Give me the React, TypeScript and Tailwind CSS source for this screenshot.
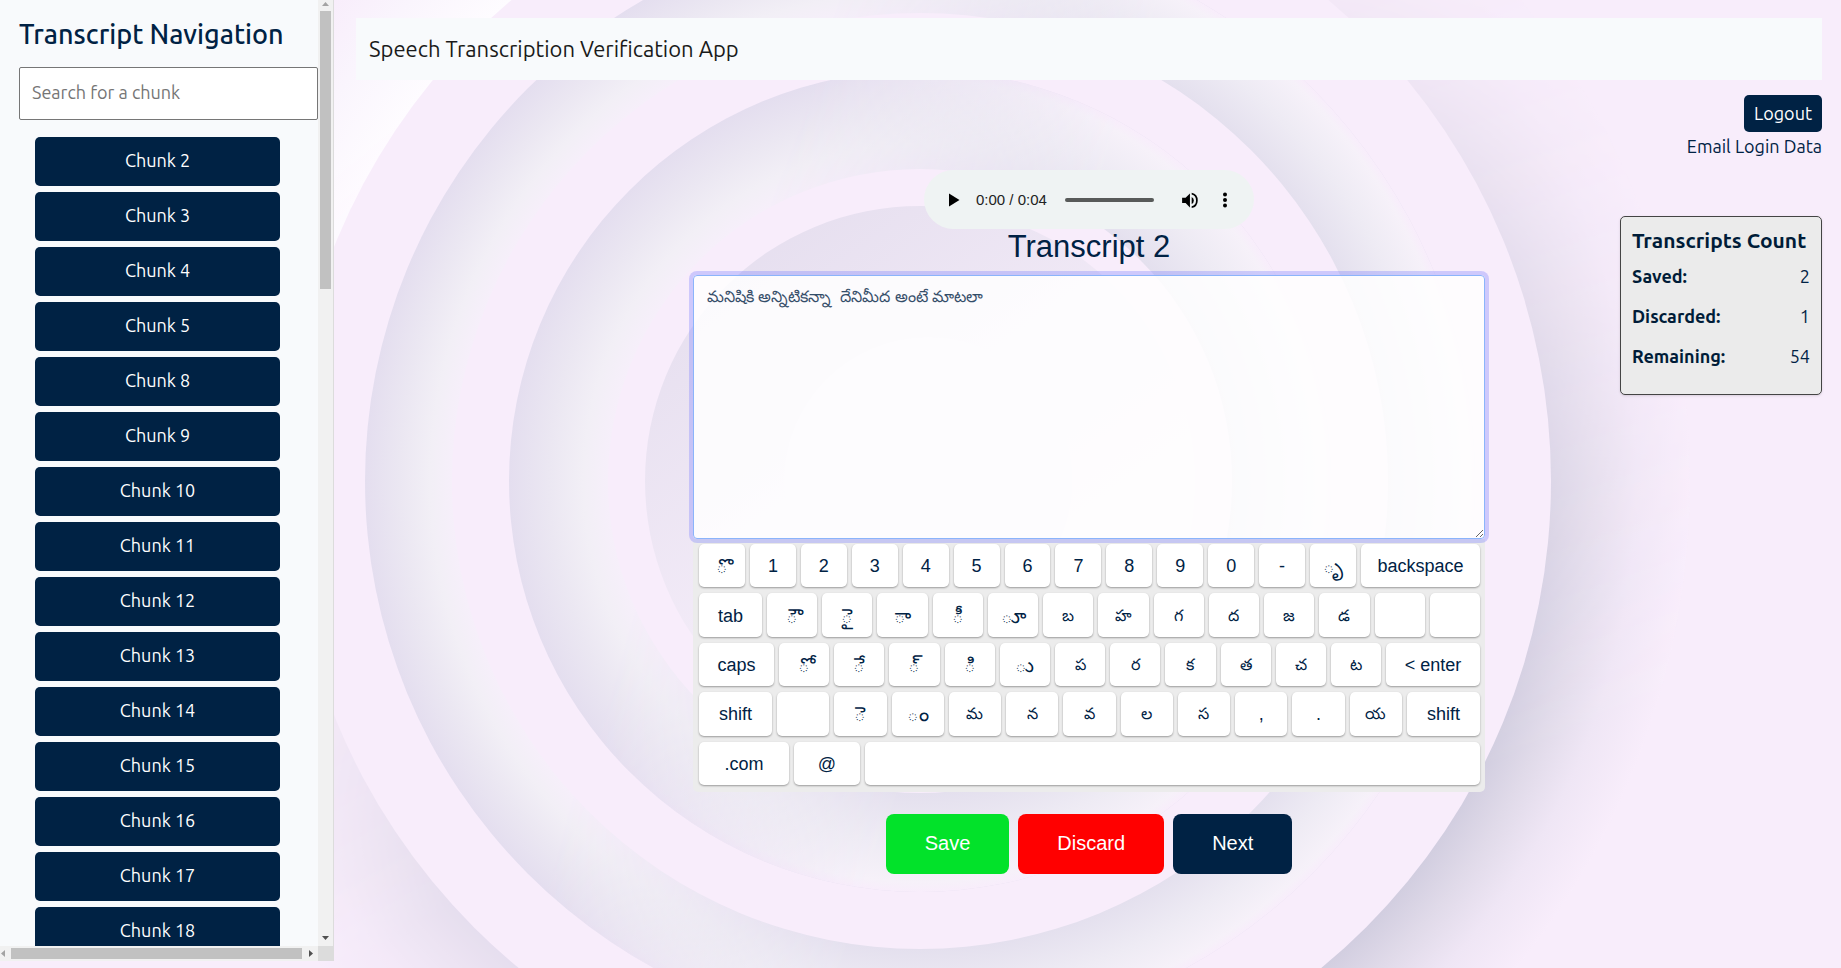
import React from "react";

const chunks = [2, 3, 4, 5, 8, 9, 10, 11, 12, 13, 14, 15, 16, 17, 18];

type Key = { label: string; width?: string };

const plain = (labels: string[]): Key[] => labels.map((label) => ({ label }));

const keyRows: Key[][] = [
  [...plain(["ొ", "1", "2", "3", "4", "5", "6", "7", "8", "9", "0", "-", "ృ"]), { label: "backspace", width: "w-[119px]" }],
  [{ label: "tab", width: "w-[63px]" }, ...plain(["ౌ", "ై", "ా", "ీ", "ూ", "బ", "హ", "గ", "ద", "జ", "డ", "", ""])],
  [
    { label: "caps", width: "w-[75px]" },
    ...plain(["ో", "ే", "్", "ి", "ు", "ప", "ర", "క", "త", "చ", "ట"]),
    { label: "< enter", width: "w-[94px]" },
  ],
  [
    { label: "shift", width: "w-[73px]" },
    ...plain(["", "ె", "ం", "మ", "న", "వ", "ల", "స", ",", ".", "య"]),
    { label: "shift", width: "w-[73px]" },
  ],
  [{ label: ".com", width: "w-[90px]" }, { label: "@", width: "w-[66px]" }, { label: "" }],
];

const counts = [
  { label: "Saved:", value: 2 },
  { label: "Discarded:", value: 1 },
  { label: "Remaining:", value: 54 },
];

// Dependent vowel signs read small on a dotted circle, full letters read large.
function keyTextSize(label: string) {
  if (/^[\u0c00-\u0c04\u0c3e-\u0c56]/.test(label)) return "text-[20px]";
  if (/^[\u0c05-\u0c39]/.test(label)) return "text-[16px]";
  return "text-[18px]";
}

function Groove({ id, outer, inner }: { id: string; outer: number; inner: number }) {
  const k = inner / outer;
  const at = (t: number) => k + (1 - k) * t;
  return (
    <g>
      <defs>
        <radialGradient id={`${id}-a`} gradientUnits="userSpaceOnUse" cx="920" cy="481" r={outer}>
          <stop offset={k} stopColor="#f6effa" />
          <stop offset={at(0.25)} stopColor="#f2eff6" />
          <stop offset={at(0.6)} stopColor="#ebe7f2" />
          <stop offset="1" stopColor="#e4deef" />
        </radialGradient>
        <radialGradient id={`${id}-b`} gradientUnits="userSpaceOnUse" cx="920" cy="481" r={outer}>
          <stop offset={k} stopColor="#e4e0ee" />
          <stop offset={at(0.5)} stopColor="#eeebf4" />
          <stop offset={at(0.9)} stopColor="#f6f1f9" />
          <stop offset="1" stopColor="#f8edfb" />
        </radialGradient>
      </defs>
      <circle cx="920" cy="481" r={outer} fill={`url(#${id}-a)`} />
      <circle cx="920" cy="481" r={outer} fill={`url(#${id}-b)`} mask="url(#lowerRight)" />
      <circle cx="920" cy="481" r={inner} fill="#f8edfb" />
    </g>
  );
}

function Backdrop() {
  return (
    <svg
      aria-hidden="true"
      className="absolute inset-0 -z-10 h-full w-full"
      viewBox="0 0 1841 968"
      preserveAspectRatio="xMidYMid slice"
    >
      <defs>
        <linearGradient id="toLowerRight" gradientUnits="userSpaceOnUse" x1="700" y1="400" x2="1000" y2="500">
          <stop offset="0" stopColor="#000" />
          <stop offset="1" stopColor="#fff" />
        </linearGradient>
        <linearGradient id="toUpperLeft" gradientUnits="userSpaceOnUse" x1="420" y1="80" x2="700" y2="420">
          <stop offset="0" stopColor="#fff" />
          <stop offset="1" stopColor="#000" />
        </linearGradient>
        <linearGradient id="castFade" gradientUnits="userSpaceOnUse" x1="1150" y1="60" x2="1400" y2="800">
          <stop offset="0" stopColor="#222" />
          <stop offset="1" stopColor="#fff" />
        </linearGradient>
        <linearGradient id="castFadeLeft" gradientUnits="userSpaceOnUse" x1="300" y1="620" x2="460" y2="900">
          <stop offset="0" stopColor="#000" />
          <stop offset="1" stopColor="#777" />
        </linearGradient>
        <linearGradient id="innerFade" gradientUnits="userSpaceOnUse" x1="800" y1="200" x2="1060" y2="560">
          <stop offset="0" stopColor="#e6dfef" />
          <stop offset="1" stopColor="#f8f0fb" />
        </linearGradient>
        <mask id="lowerRight" maskUnits="userSpaceOnUse" x="0" y="-200" width="1841" height="1400">
          <rect x="0" y="-200" width="1841" height="1400" fill="url(#toLowerRight)" />
        </mask>
        <mask id="upperLeft" maskUnits="userSpaceOnUse" x="0" y="-200" width="1841" height="1400">
          <rect x="0" y="-200" width="1841" height="1400" fill="url(#toUpperLeft)" />
        </mask>
        <mask id="cast" maskUnits="userSpaceOnUse" x="0" y="-200" width="1841" height="1400">
          <rect x="920" y="-200" width="921" height="1400" fill="url(#castFade)" />
          <rect x="0" y="500" width="920" height="700" fill="url(#castFadeLeft)" />
        </mask>
        <radialGradient id="glow" gradientUnits="userSpaceOnUse" cx="920" cy="481" r="760">
          <stop offset="0.83" stopColor="#fefcff" />
          <stop offset="0.92" stopColor="#faf5fd" />
          <stop offset="1" stopColor="#f8edfb" />
        </radialGradient>
        <radialGradient id="castShadow" gradientUnits="userSpaceOnUse" cx="920" cy="481" r="770">
          <stop offset="0.82" stopColor="#d2cee0" />
          <stop offset="0.87" stopColor="#e0dae9" />
          <stop offset="0.93" stopColor="#efe6f5" />
          <stop offset="1" stopColor="#f8edfb" />
        </radialGradient>
      </defs>
      <rect width="1841" height="968" fill="#f8edfb" />
      <circle cx="920" cy="481" r="760" fill="url(#glow)" mask="url(#upperLeft)" />
      <circle cx="920" cy="481" r="770" fill="url(#castShadow)" mask="url(#cast)" />
      <circle cx="920" cy="481" r="631" fill="#f8edfb" />
      <Groove id="g1" outer={555} inner={468} />
      <Groove id="g2" outer={411} inner={312} />
      <circle cx="920" cy="481" r="275" fill="url(#innerFade)" />
      <circle cx="928" cy="481" r="144" fill="#efe8f5" />
    </svg>
  );
}

function Sidebar() {
  return (
    <aside className="flex h-[961px] w-[334px] shrink-0 flex-col border-r border-[#dcdcdc] bg-[#f8fafc]">
      <div className="flex min-h-0 flex-1">
        <div className="min-w-0 flex-1 overflow-hidden pl-[19px] pt-3">
          <h2 className="text-[27px] font-medium leading-[44px] text-[#002244]">Transcript Navigation</h2>
          <input
            type="text"
            aria-label="Search for a chunk"
            placeholder="Search for a chunk"
            className="mt-[11px] block h-[53px] w-full rounded-[2px] border border-[#767676] bg-white px-3 pb-[3px] text-[18px] text-[#002244] placeholder:text-[#757575]"
          />
          <ul className="mt-[17px] flex flex-col gap-[6px] pl-4 pr-[38px]">
            {chunks.map((n) => (
              <li key={n}>
                <button type="button" className="block h-[49px] w-full rounded-[5px] bg-[#002244] pb-[2px] text-[18px] text-white">
                  Chunk {n}
                </button>
              </li>
            ))}
          </ul>
        </div>
        <div aria-hidden="true" className="flex w-[15px] shrink-0 flex-col items-center bg-[#f1f1f1]">
          <svg className="h-[11px] w-[15px]" viewBox="0 0 15 11">
            <path d="M4 6h7L7.500 2z" fill="#a3a3a3" />
          </svg>
          <div className="h-[278px] w-[11px] bg-[#c1c1c1]" />
          <svg className="mt-auto h-[15px] w-[15px]" viewBox="0 0 15 15">
            <path d="M4 5h7L7.500 9z" fill="#505050" />
          </svg>
        </div>
      </div>
      <div aria-hidden="true" className="flex h-[15px] items-center bg-[#f1f1f1]">
        <svg className="h-[15px] w-[11px]" viewBox="0 0 11 15">
          <path d="M5 4v7L1 7.500z" fill="#a3a3a3" />
        </svg>
        <div className="h-[11px] flex-1 bg-[#c1c1c1]" />
        <svg className="h-[15px] w-4" viewBox="0 0 16 15">
          <path d="M7 4v7l4-3.500z" fill="#505050" />
        </svg>
        <div className="h-full w-[15px] bg-[#dcdcdc]" />
      </div>
    </aside>
  );
}

function AudioPlayer() {
  return (
    <div className="flex h-[59px] w-[330px] items-center rounded-full bg-[#eff3f3] pl-[19px] pr-[17px] text-black">
      <button type="button" aria-label="Play">
        <svg className="h-6 w-6" viewBox="0 0 24 24">
          <path d="M6 5.500v13l10.500-6.500z" />
        </svg>
      </button>
      <span className="ml-[9px] pt-px text-[15px] text-[#222]">0:00 / 0:04</span>
      <input
        type="range"
        aria-label="Playback position"
        min={0}
        max={4}
        defaultValue={0}
        className="ml-[18px] h-1 min-w-0 flex-1 appearance-none rounded-full bg-[#585a59] [&::-webkit-slider-thumb]:h-0 [&::-webkit-slider-thumb]:w-0 [&::-webkit-slider-thumb]:appearance-none"
      />
      <button type="button" aria-label="Mute" className="ml-6">
        <svg className="h-6 w-6" viewBox="0 0 24 24">
          <path d="M3 9v6h4l5 5V4L7 9H3zm13.500 3A4.500 4.500 0 0 0 14 7.970v8.050A4.490 4.490 0 0 0 16.500 12zM14 3.230v2.060a7 7 0 0 1 0 13.420v2.060a9 9 0 0 0 0-17.540z" transform="translate(1.500 2) scale(.87)" />
        </svg>
      </button>
      <button type="button" aria-label="More options" className="ml-[11px]">
        <svg className="h-6 w-6" viewBox="0 0 24 24">
          <circle cx="12" cy="6.500" r="2" />
          <circle cx="12" cy="12" r="2" />
          <circle cx="12" cy="17.500" r="2" />
        </svg>
      </button>
    </div>
  );
}

function Keyboard() {
  return (
    <div className="flex h-[253px] w-full flex-col gap-[6px] rounded-b-[5px] bg-[#ececec] pb-[7px] pl-[6px] pr-[5px] pt-[5px]">
      {keyRows.map((row, r) => (
        <div key={r} className="flex min-h-0 flex-1 gap-[5px]">
          {row.map((key, i) => (
            <button
              key={i}
              type="button"
              aria-label={key.label || "blank"}
              className={`flex items-center justify-center rounded-[5px] bg-white pt-px leading-6 text-[#002244] shadow-[0_1px_2px_rgba(0,0,0,0.35)] ${keyTextSize(key.label)} ${key.width ? `${key.width} shrink-0` : "min-w-0 flex-1"}`}
            >
              {key.label}
            </button>
          ))}
        </div>
      ))}
    </div>
  );
}

export default function App() {
  return (
    <div className="relative isolate flex min-h-screen items-start overflow-hidden font-['Ubuntu','Noto_Sans',sans-serif] text-[#002244]">
      <Backdrop />
      <Sidebar />
      <main className="min-w-0 flex-1 pl-[22px] pr-[19px] pt-[18px]">
        <header className="flex h-[62px] items-center bg-[#f8fafc] px-[13px] pb-[2px]">
          <h1 className="text-[22px] text-[#1a1a1a]">Speech Transcription Verification App</h1>
        </header>
        <div className="grid grid-cols-[202px_1fr_202px] items-start">
          <section className="col-start-2 flex flex-col items-center pt-[90px] font-['Liberation_Sans','Vemana2000','Pothana2000','Lohit_Telugu',sans-serif]">
            <AudioPlayer />
            <h2 className="mb-[10px] text-[31px] leading-9">Transcript 2</h2>
            <div className="w-[792px] max-w-full">
              <textarea
                aria-label="Transcript text"
                defaultValue="మనిషికి అన్నిటికన్నా  దేనిమీద అంటే మాటలా"
                className="relative block h-[264px] w-full resize rounded-[4px] border border-[#8bb4fb] bg-white/85 px-[13px] py-[7px] text-[16px] leading-7 text-[#002244]/80 shadow-[0_0_0_4px_rgba(120,125,255,0.33)] outline-none"
              />
              <Keyboard />
            </div>
            <div className="mt-[22px] flex gap-[9px] text-[20px] text-white">
              <button type="button" className="h-[60px] rounded-lg bg-[#02e22a] px-[39px] pb-[2px]">Save</button>
              <button type="button" className="h-[60px] rounded-lg bg-[#ff0000] px-[39px] pb-[2px]">Discard</button>
              <button type="button" className="h-[60px] rounded-lg bg-[#002244] px-[39px] pb-[2px]">Next</button>
            </div>
          </section>
          <aside className="flex flex-col items-end pt-[15px]">
            <button type="button" className="h-[37px] rounded-[5px] bg-[#002244] px-[10px] text-[18px] text-white">
              Logout
            </button>
            <p className="text-[18px] leading-7">Email Login Data</p>
            <section className="mt-[56px] h-[179px] w-full rounded-[5px] border border-[#444] bg-[#ebebeb] px-[11px] pt-[7px] shadow-sm">
              <h2 className="whitespace-nowrap text-[21px] font-bold leading-8 text-[#001c38]">Transcripts Count</h2>
              <dl className="text-[18px] leading-10">
                {counts.map(({ label, value }) => (
                  <div key={label} className="flex justify-between">
                    <dt className="font-bold text-[#001c38]">{label}</dt>
                    <dd>{value}</dd>
                  </div>
                ))}
              </dl>
            </section>
          </aside>
        </div>
      </main>
    </div>
  );
}
